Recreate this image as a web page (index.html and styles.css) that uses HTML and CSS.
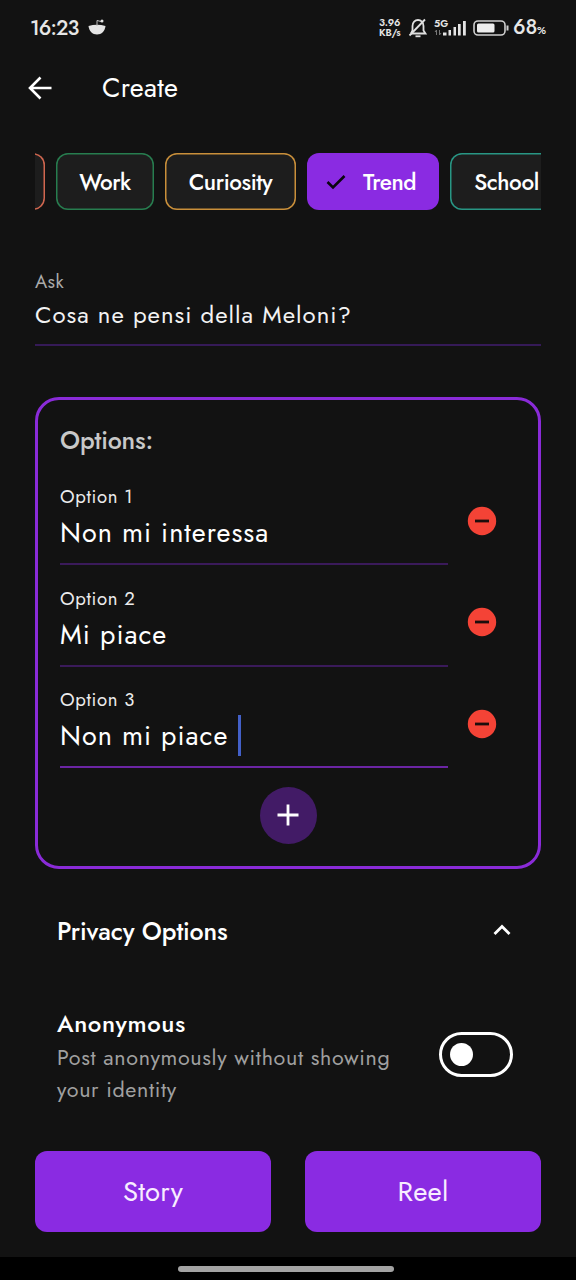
FILE: index.html
```html
<!DOCTYPE html>
<html lang="en">
<head>
<meta charset="utf-8">
<title>Create</title>
<link rel="stylesheet" href="styles.css">
</head>
<body>
<div class="screen">
  <div class="status">
    <span class="clock">16:23</span>
    <svg class="bowl" width="18" height="18" viewBox="0 0 18 18"><path d="M.5 7Q9 4.500 17.500 7C17 12 13.500 15.500 9 15.500S1 12 .5 7Z" fill="#e4e4e4"/><path d="M9 7V1.500L13 2.500" fill="none" stroke="#bbb" stroke-width="1"/><circle cx="14" cy="2" r="1.500" fill="#e4e4e4"/></svg>
    <span class="speed"><span>3.96</span><span>KB/s</span></span>
    <svg class="bell" width="20" height="20" viewBox="0 0 20 20" fill="none" stroke="#e0e0e0" stroke-width="1.800"><path d="M3 15.500H17.500L15.500 12.500V8C15.500 4.500 13 2 10 2S4.500 4.500 4.500 8V12.500L3 15.500"/><path d="M1.500 17.500L17 1.500"/><path d="M7.500 18.300H12.500"/></svg>
    <span class="signal">
      <span class="net">5G</span>
      <svg width="33" height="16" viewBox="0 0 33 16"><g fill="#e4e4e4"><rect x="9" y="12.500" width="3.500" height="3"/><rect x="14.500" y="10" width="2.500" height="5.500"/><rect x="19.500" y="7" width="2.500" height="8.500"/><rect x="24" y="4" width="2.700" height="11.500"/><rect x="29" y="1" width="2.800" height="14.500"/></g><path d="M2.500 15V10L1 12M5.500 10V15L7 13" fill="none" stroke="#777" stroke-width="1"/></svg>
    </span>
    <svg class="battery" width="37" height="16" viewBox="0 0 37 16"><rect x="1" y="1" width="31" height="14" rx="4" fill="none" stroke="#cfcfcf" stroke-width="1.600"/><rect x="4" y="3.500" width="17.500" height="9" rx="1.500" fill="#eee"/><path d="M34.500 5.500V10.500" stroke="#cfcfcf" stroke-width="2"/></svg>
    <span class="pct">68<small>%</small></span>
  </div>

  <header class="appbar">
    <svg width="24" height="24" viewBox="0 0 24 24" fill="none" stroke="#fff" stroke-width="2.600"><path d="M12.500 1.500L2 12L12.500 22.500M2 12H23.500"/></svg>
    <h1 class="title">Create</h1>
  </header>

  <div class="chips">
    <span class="chip chip-red"></span>
    <span class="chip chip-green">Work</span>
    <span class="chip chip-amber">Curiosity</span>
    <span class="chip chip-on"><svg width="20" height="16" viewBox="0 0 20 16"><path d="M1.500 8L7 13.500L18.500 2" fill="none" stroke="#0b0610" stroke-width="2.600"/></svg><span class="trend">Trend</span></span>
    <span class="chip chip-teal">School</span>
  </div>

  <div class="ask">
    <div class="ask-label">Ask</div>
    <div class="ask-value">Cosa ne pensi della Meloni?</div>
  </div>

  <section class="card">
    <h2 class="card-title">Options:</h2>
    <div class="row">
      <div class="field"><div class="label">Option 1</div><div class="value">Non mi interessa</div></div>
      <svg class="minus" width="30" height="30" viewBox="0 0 30 30"><circle cx="15" cy="15" r="14.200" fill="#f44336"/><path d="M8 15H22" stroke="#1c0d0c" stroke-width="2.800"/></svg>
    </div>
    <div class="row">
      <div class="field"><div class="label">Option 2</div><div class="value">Mi piace</div></div>
      <svg class="minus" width="30" height="30" viewBox="0 0 30 30"><circle cx="15" cy="15" r="14.200" fill="#f44336"/><path d="M8 15H22" stroke="#1c0d0c" stroke-width="2.800"/></svg>
    </div>
    <div class="row">
      <div class="field field-active"><div class="label">Option 3</div><div class="value">Non mi piace<span class="caret"></span></div></div>
      <svg class="minus" width="30" height="30" viewBox="0 0 30 30"><circle cx="15" cy="15" r="14.200" fill="#f44336"/><path d="M8 15H22" stroke="#1c0d0c" stroke-width="2.800"/></svg>
    </div>
    <div class="add"><svg width="22" height="22" viewBox="0 0 22 22"><path d="M11 .5V21.500M.5 11H21.500" stroke="#fff" stroke-width="2.800"/></svg></div>
  </section>

  <div class="privacy">
    <h2 class="privacy-title">Privacy Options</h2>
    <svg width="18" height="12" viewBox="0 0 18 12"><path d="M1.500 10L9 2.500L16.500 10" fill="none" stroke="#fff" stroke-width="2.800"/></svg>
  </div>

  <div class="anon">
    <div>
      <div class="anon-title">Anonymous</div>
      <div class="desc">Post anonymously without showing<br>your identity</div>
    </div>
    <div class="toggle"><span class="knob"></span></div>
  </div>

  <div class="actions">
    <div class="btn">Story</div>
    <div class="btn">Reel</div>
  </div>
  <div class="nav"><div class="pill"></div></div>
</div>
</body>
</html>
```
FILE: styles.css
```css
* { box-sizing: border-box; }
body { margin: 0; background: #121212; color: #fff; font-family: Jost, Lato, sans-serif; }
h1, h2 { margin: 0; font-weight: 400; }
svg { display: block; flex: none; }
.screen { width: 576px; height: 1280px; display: flex; flex-direction: column; background: #121212; overflow: hidden; white-space: nowrap; }
.screen > * { flex: none; }

.status { height: 56px; display: flex; align-items: center; padding-left: 30px; color: #e6e6e6; }
.clock { width: 58px; font-size: 20.500px; letter-spacing: -0.9px; font-weight: 500; line-height: 24px; margin-top: -1px; }
.bowl { margin-top: 0; }
.speed { display: flex; flex-direction: column; margin-left: 273px; width: 29px; font-size: 10px; letter-spacing: -0.1px; font-weight: 600; line-height: 10px; margin-top: -1px; }
.signal { position: relative; margin-left: 6px; }
.net { position: absolute; left: 0; top: -1px; font-size: 10px; line-height: 10px; font-weight: 600; }
.battery { margin-left: 6px; }
.pct { margin-left: 3px; font-size: 20.500px; letter-spacing: -0.2px; line-height: 24px; font-weight: 500; }
.pct small { font-size: 11px; }

.appbar { height: 64px; display: flex; align-items: center; padding-left: 28px; }
.title { margin-left: 50px; font-size: 27px; letter-spacing: 0.25px; line-height: 32px; }

.chips { margin: 33px 35px 0; height: 57px; display: flex; gap: 11px; overflow: hidden; }
.chip { flex: none; height: 57px; display: flex; align-items: center; justify-content: center; border-radius: 12px; background: #1d1d1d; font-size: 22.500px; letter-spacing: -0.4px; font-weight: 500; padding-top: 1px; }
.chip-red { width: 60px; margin-left: -50px; box-shadow: inset 0 0 0 1.500px #d0664f; }
.chip-green { width: 98px; box-shadow: inset 0 0 0 1.500px #277d4f; }
.chip-amber { width: 131px; box-shadow: inset 0 0 0 1.500px #c98f3a; }
.chip-on { width: 132px; background: #8a2be2; justify-content: flex-start; padding-left: 19px; gap: 17px; }
.chip-teal { width: 113px; box-shadow: inset 0 0 0 1.500px #289684; }

.ask { margin: 58px 35px 0; height: 78px; border-bottom: 2px solid #351a57; }
.ask-label { font-size: 18.500px; letter-spacing: 0.4px; line-height: 28px; color: #aaa; }
.ask-value { font-size: 24px; letter-spacing: 0.98px; line-height: 32px; margin-top: 3px; color: #f2f2f2; }

.card { margin: 51px 35px 0; width: 506px; height: 472px; border: 3px solid #8a2bd8; border-radius: 24px; padding-left: 22px; }
.card-title { height: 63px; padding-top: 24px; font-size: 25px; letter-spacing: -0.15px; line-height: 32px; font-weight: 500; color: #c8c8c8; }
.row { display: flex; height: 101.500px; }
.field { width: 388px; height: 102px; padding-top: 22px; border-bottom: 2px solid #3a1a5a; }
.field-active { border-bottom-color: #6b25a4; }
.label { font-size: 18.500px; letter-spacing: 0.65px; line-height: 24px; color: #ececec; }
.value { display: flex; font-size: 27px; letter-spacing: 1px; line-height: 34px; margin-top: 7px; }
.caret { width: 3px; height: 41px; margin: -4px 0 -7px 9.500px; background: #4360c8; }
.minus { margin: 42.500px 0 0 19px; }
.add { display: flex; align-items: center; justify-content: center; width: 57px; height: 57px; border-radius: 50%; background: #421b66; margin: 19px 0 0 199.500px; }

.privacy { display: flex; align-items: center; justify-content: space-between; margin: 45px 65px 0 57px; height: 34px; }
.privacy svg { margin-top: -3px; }
.privacy-title { font-size: 25px; letter-spacing: -0.12px; line-height: 34px; font-weight: 500; }

.anon { display: flex; justify-content: space-between; margin: 60px 63px 0 57px; height: 100px; }
.anon-title { font-size: 24px; letter-spacing: 0.6px; line-height: 32px; font-weight: 500; }
.desc { margin-top: 2px; font-size: 21.500px; letter-spacing: 0.64px; line-height: 32px; color: #a0a0a0; }
.toggle { width: 74px; height: 45px; margin-top: 24px; border: 3px solid #fff; border-radius: 23px; padding: 8px; }
.knob { display: block; width: 23px; height: 23px; border-radius: 50%; background: #fff; }

.actions { display: flex; gap: 34px; margin: 43px 35px 0; height: 81px; }
.btn { flex: 1; display: flex; align-items: center; justify-content: center; border-radius: 12px; background: #8a2be2; font-size: 27.500px; letter-spacing: 0.2px; color: #f8edff; }
.nav { margin-top: auto; height: 23px; background: #000; display: flex; justify-content: center; padding-top: 9px; }
.pill { width: 216px; height: 6px; border-radius: 3px; background: #a3a3a3; margin-right: 4px; }
```
